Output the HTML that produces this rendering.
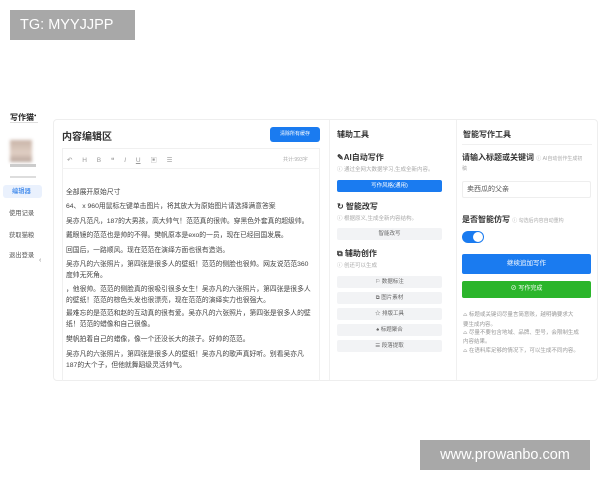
<!DOCTYPE html>
<html><head><meta charset="utf-8"><style>
*{margin:0;padding:0;box-sizing:border-box}
body{width:600px;height:480px;background:#fff;position:relative;overflow:hidden;font-family:"Liberation Sans","Noto Sans CJK SC",sans-serif;color:#333}
.a{position:absolute;white-space:nowrap}
.t{font-size:6.8px;color:#444;left:66px}
.g{font-size:5.5px;color:#aaa}
.gb{position:absolute;left:337px;width:105px;height:12px;background:#f2f3f5;border-radius:2px;font-size:5.5px;color:#666;text-align:center;line-height:12px}
.n{font-size:5.5px;color:#999;left:463px}
</style></head><body>
<div class="a" style="left:10px;top:10px;width:125px;height:30px;background:#a8a8a8;color:#fff;font-size:14.5px;line-height:30px;padding-left:10px">TG: MYYJJPP</div>
<div class="a" style="left:420px;top:440px;width:170px;height:30px;background:#a8a8a8;color:#fff;font-size:14.5px;line-height:30px;text-align:center">www.prowanbo.com</div>

<!-- sidebar -->
<div class="a" style="left:10px;top:112px;font-size:8px;font-weight:bold;color:#222">写作猫<sup style="font-size:4px">●</sup></div>
<div class="a" style="left:10px;top:122px;width:28px;height:1px;background:#ddd"></div>
<div class="a" style="left:10px;top:140px;width:22px;height:22px;background:linear-gradient(#c9b4a8,#e0cfc4 60%,#b8a49a);filter:blur(1.5px)"></div>
<div class="a" style="left:10px;top:164px;width:26px;height:3px;background:#ccc"></div>
<div class="a" style="left:10px;top:176px;width:26px;height:2px;background:#ddd"></div>
<div class="a" style="left:3px;top:185px;width:39px;height:13px;background:#eaf1fd;border-radius:3px;font-size:6.3px;color:#1a73e8;line-height:13px;padding-left:9px">编辑器</div>
<div class="a" style="left:9px;top:208px;font-size:6.3px;color:#555">使用记录</div>
<div class="a" style="left:9px;top:230px;font-size:6.3px;color:#555">获取猫粮</div>
<div class="a" style="left:9px;top:250px;font-size:6.3px;color:#555">退出登录</div>
<div class="a" style="left:39px;top:257px;font-size:7px;color:#888">‹</div>

<!-- main container -->
<div class="a" style="left:53px;top:119px;width:545px;height:262px;border:1px solid #eee;border-radius:4px;background:#fff"></div>
<div class="a" style="left:62px;top:128px;font-size:10px;font-weight:bold;color:#333">内容编辑区</div>
<div class="a" style="left:270px;top:127px;width:50px;height:15px;background:#1a7bf0;border-radius:3px;color:#fff;font-size:5px;text-align:center;line-height:15px">清除所有缓存</div>
<div class="a" style="left:62px;top:148px;width:258px;height:233px;border:1px solid #f0f0f0;border-bottom:none"></div>
<div class="a" style="left:67px;top:154px;font-size:6.5px;color:#999;word-spacing:8px">↶ H B ❝ <i>I</i> <u>U</u> ▣ ☰</div>
<div class="a" style="left:283px;top:156px;font-size:5px;color:#aaa">共计:993字</div>
<div class="a" style="left:62px;top:168px;width:258px;height:1px;background:#f2f2f2"></div>
<div class="a t" style="top:186px">全部展开原始尺寸</div>
<div class="a t" style="top:200px">64、 x 960用鼠标左键单击图片，将其放大为原始图片请选择满意答案</div>
<div class="a t" style="top:215px">吴亦凡范凡，187的大男孩，高大帅气！范范真的很帅。穿黑色外套真的超级帅。</div>
<div class="a t" style="top:229px">戴眼镜的范范也是帅的不得。樊帆原本是exo的一员，现在已经回国发展。</div>
<div class="a t" style="top:244px">回国后，一路顺风。现在范范在演绎方面也很有造诣。</div>
<div class="a t" style="top:258px">吴亦凡的六张照片，第四张是很多人的壁纸！范范的侧脸也很帅。网友说范范360</div>
<div class="a t" style="top:269px">度帅无死角。</div>
<div class="a t" style="top:283px">，他很帅。范范的侧脸真的很吸引很多女生！吴亦凡的六张照片，第四张是很多人</div>
<div class="a t" style="top:294px">的壁纸！范范的棕色头发也很漂亮，现在范范的演绎实力也很强大。</div>
<div class="a t" style="top:307px">最难忘的是范范和赵的互动真的很有爱。吴亦凡的六张照片，第四张是很多人的壁</div>
<div class="a t" style="top:318px">纸！范范的蜡像和自己很像。</div>
<div class="a t" style="top:333px">樊帆拍着自己的蜡像，像一个还没长大的孩子。好帅的范范。</div>
<div class="a t" style="top:348px">吴亦凡的六张照片，第四张是很多人的壁纸！吴亦凡的歌声真好听。别看吴亦凡</div>
<div class="a t" style="top:359px">187的大个子，但他就舞蹈级灵活帅气。</div>

<!-- tools -->
<div class="a" style="left:329px;top:120px;width:1px;height:260px;background:#f0f0f0"></div>
<div class="a" style="left:456px;top:120px;width:1px;height:260px;background:#f0f0f0"></div>
<div class="a" style="left:337px;top:129px;font-size:8px;font-weight:bold;color:#333">辅助工具</div>
<div class="a" style="left:337px;top:152px;font-size:8px;font-weight:bold;color:#333">✎AI自动写作</div>
<div class="a g" style="left:337px;top:165px">ⓘ 通过全网大数据学习,生成全新内容。</div>
<div class="a" style="left:337px;top:180px;width:105px;height:12px;background:#1a7bf0;border-radius:2px;font-size:5.5px;color:#fff;text-align:center;line-height:12px">写作风格(通用)</div>
<div class="a" style="left:337px;top:201px;font-size:8px;font-weight:bold;color:#333">↻ 智能改写</div>
<div class="a g" style="left:337px;top:214px">ⓘ 根据原义,生成全新内容结构。</div>
<div class="gb" style="top:228px">智能改写</div>
<div class="a" style="left:337px;top:248px;font-size:8px;font-weight:bold;color:#333">⧉ 辅助创作</div>
<div class="a g" style="left:337px;top:261px">ⓘ 创还可以生成</div>
<div class="gb" style="top:276px">⚐ 数据标注</div>
<div class="gb" style="top:292px">⧉ 图片素材</div>
<div class="gb" style="top:308px">☆ 排版工具</div>
<div class="gb" style="top:324px">♠ 标题聚合</div>
<div class="gb" style="top:340px">☰ 段落提取</div>

<div class="a" style="left:463px;top:129px;font-size:8px;font-weight:bold;color:#333">智能写作工具</div>
<div class="a" style="left:462px;top:144px;width:130px;height:1px;background:#f0f0f0"></div>
<div class="a" style="left:462px;top:152px;font-size:8px;font-weight:bold;color:#333">请输入标题或关键词 <span style="font-size:5px;color:#aaa;font-weight:normal">ⓘ AI自动创作生成初</span></div>
<div class="a" style="left:462px;top:165px;font-size:5px;color:#aaa">稿</div>
<div class="a" style="left:462px;top:181px;width:129px;height:17px;border:1px solid #eee;border-radius:2px;font-size:7px;color:#555;line-height:15px;padding-left:4px">卖西瓜的父亲</div>
<div class="a" style="left:462px;top:214px;font-size:8px;font-weight:bold;color:#333">是否智能仿写 <span style="font-size:5px;color:#aaa;font-weight:normal">ⓘ 勾选后内容自动重构</span></div>
<div class="a" style="left:462px;top:231px;width:22px;height:12px;background:#1a7bf0;border-radius:6px"><div style="position:absolute;right:1px;top:1px;width:10px;height:10px;border-radius:50%;background:#fff"></div></div>
<div class="a" style="left:462px;top:254px;width:129px;height:20px;background:#1a7bf0;border-radius:2px;font-size:6.5px;color:#fff;text-align:center;line-height:20px">继续追加写作</div>
<div class="a" style="left:462px;top:281px;width:129px;height:17px;background:#2bb52b;border-radius:2px;font-size:6px;color:#fff;text-align:center;line-height:17px">⊘ 写作完成</div>
<div class="a n" style="top:310px">⌓ 标题或关键词尽量言简意赅，越明确要求大</div>
<div class="a n" style="top:320px">要生成内容。</div>
<div class="a n" style="top:328px">⌓ 尽量不要包含地域、品牌、型号，会限制生成</div>
<div class="a n" style="top:337px">内容结果。</div>
<div class="a n" style="top:346px">⌓ 在语料库足够的情况下，可以生成不同内容。</div>
</body></html>
